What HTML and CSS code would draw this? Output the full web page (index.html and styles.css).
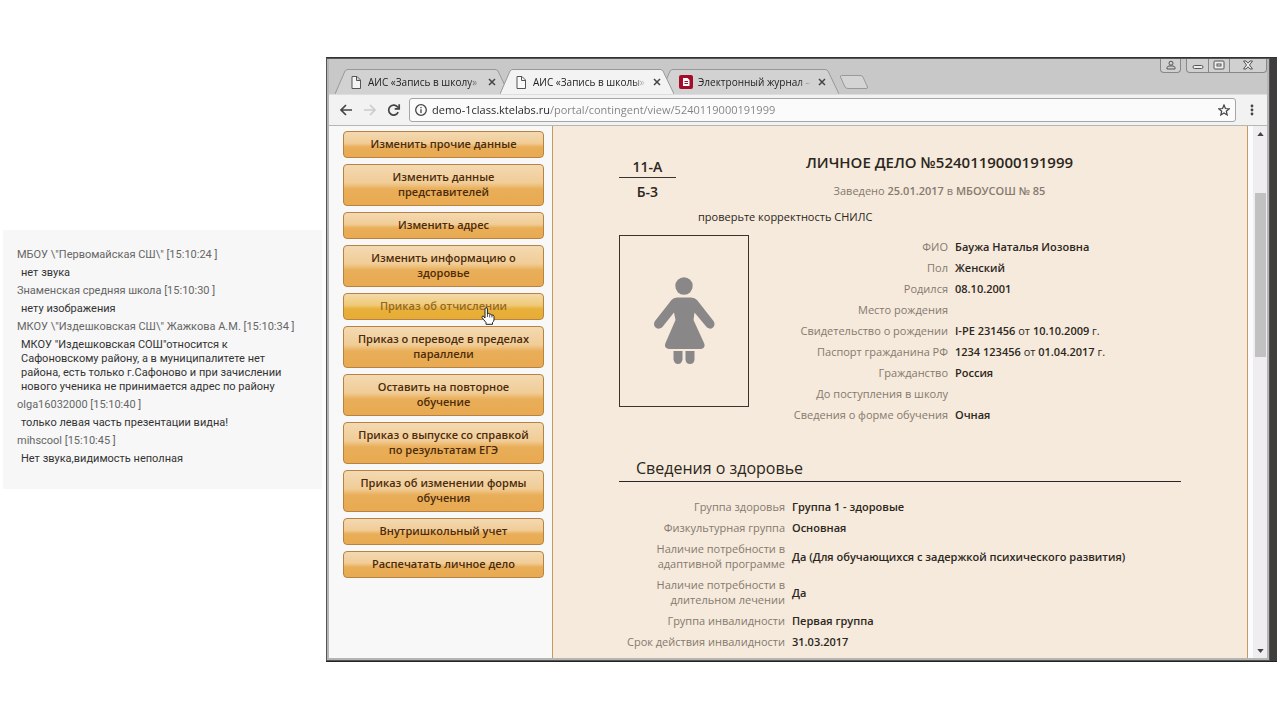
FILE: index.html
```html
<!DOCTYPE html>
<html lang="ru">
<head>
<meta charset="utf-8">
<title>АИС «Запись в школы»</title>
<link rel="stylesheet" href="styles.css">
</head>
<body>
<div class="stage">
  <aside class="chat" aria-label="Чат">
    <p class="chat-name">МБОУ \"Первомайская СШ\" <time>[15:10:24 ]</time></p>
    <p class="chat-text">нет звука</p>
    <p class="chat-name">Знаменская средняя школа <time>[15:10:30 ]</time></p>
    <p class="chat-text">нету изображения</p>
    <p class="chat-name">МКОУ \"Издешковская СШ\" Жажкова А.М. <time>[15:10:34 ]</time></p>
    <p class="chat-text">МКОУ "Издешковская СОШ"относится к<br>Сафоновскому району, а в муниципалитете нет<br>района, есть только г.Сафоново и при зачислении<br>нового ученика не принимается адрес по району</p>
    <p class="chat-name">olga16032000 <time>[15:10:40 ]</time></p>
    <p class="chat-text">только левая часть презентации видна!</p>
    <p class="chat-name">mihscool <time>[15:10:45 ]</time></p>
    <p class="chat-text">Нет звука,видимость неполная</p>
  </aside>

  <div class="desktop">
    <div class="window">
      <header class="titlebar">
        <div class="tabs">
          <div class="tab">
            <svg class="tab-shape" viewBox="0 0 174 25" preserveAspectRatio="none"><path d="M0 25L10 2Q11 .5 13 .5H160Q162 .5 163 2L174 25" fill="#d2d2d2" stroke="#989898"/></svg>
            <svg class="page-icon" viewBox="0 0 10 13"><path d="M1 .5H6L9.500 4V12.500H1ZM5.500 .5V4.500H9.500" fill="#f4f4f4" stroke="#555"/></svg>
            <span class="tab-title">АИС «Запись в школу» -</span>
            <button class="tab-close" aria-label="Закрыть вкладку"><svg viewBox="0 0 8 8"><path d="M1 1L7 7M7 1L1 7"/></svg></button>
          </div>
          <div class="tab tab-active">
            <svg class="tab-shape" viewBox="0 0 174 25" preserveAspectRatio="none"><path d="M0 25L10 2Q11 .5 13 .5H160Q162 .5 163 2L174 25" fill="#f3f3f3" stroke="#989898"/></svg>
            <svg class="page-icon" viewBox="0 0 10 13"><path d="M1 .5H6L9.500 4V12.500H1ZM5.500 .5V4.500H9.500" fill="#fafafa" stroke="#555"/></svg>
            <span class="tab-title">АИС «Запись в школы»</span>
            <button class="tab-close" aria-label="Закрыть вкладку"><svg viewBox="0 0 8 8"><path d="M1 1L7 7M7 1L1 7"/></svg></button>
          </div>
          <div class="tab">
            <svg class="tab-shape" viewBox="0 0 174 25" preserveAspectRatio="none"><path d="M5 25L0 14L5 2Q6 .5 8 .5H160Q162 .5 163 2L174 25" fill="#d2d2d2" stroke="#989898"/></svg>
            <svg class="journal-icon" viewBox="0 0 14 14"><rect width="14" height="14" rx="2" fill="#a30d2a"/><path d="M4 3H8.500L10.500 5V11H4Z" fill="#fff"/><path d="M5.500 6.500H9M5.500 8.500H9" stroke="#a30d2a"/></svg>
            <span class="tab-title">Электронный журнал —</span>
            <button class="tab-close" aria-label="Закрыть вкладку"><svg viewBox="0 0 8 8"><path d="M1 1L7 7M7 1L1 7"/></svg></button>
          </div>
          <button class="new-tab" aria-label="Новая вкладка"><svg viewBox="0 0 30 16"><path d="M2.500 1.500H21Q23 1.500 24 3L28.500 13Q29 14.500 27 14.500H9Q7 14.500 6 13L1.500 3Q1 1.500 2.500 1.500Z" fill="#d4d4d4" stroke="#999"/></svg></button>
        </div>
        <div class="window-controls">
          <button class="control-user" aria-label="Профиль"><svg viewBox="0 0 10 10"><circle cx="5" cy="3.200" r="2"/><path d="M1 9V7.500Q1 6.500 3 6H7Q9 6.500 9 7.500V9Z"/></svg></button>
          <div class="control-group">
            <button class="control" aria-label="Свернуть"><svg viewBox="0 0 12 10"><rect x="1" y="5.500" width="10" height="3" rx="1.500"/></svg></button>
            <button class="control" aria-label="Развернуть"><svg viewBox="0 0 12 10"><rect x="1" y="1" width="10" height="8" rx="1"/><rect x="4" y="4" width="4" height="2"/></svg></button>
            <button class="control control-close" aria-label="Закрыть"><svg viewBox="0 0 12 10"><path d="M1.500 1H4L6 3.200L8 1H10.500L7.500 5L10.500 9H8L6 6.800L4 9H1.500L4.500 5Z"/></svg></button>
          </div>
        </div>
      </header>

      <div class="toolbar">
        <button class="nav" aria-label="Назад"><svg viewBox="0 0 14 12"><path d="M13 6H2M7 1L2 6L7 11"/></svg></button>
        <button class="nav nav-off" aria-label="Вперёд" disabled><svg viewBox="0 0 14 12"><path d="M1 6H12M7 1L12 6L7 11"/></svg></button>
        <button class="nav" aria-label="Обновить"><svg viewBox="0 0 14 12"><path d="M11.200 8.200A5 5 0 1 1 11 3.500M12.200 .3V4.800H7.700"/></svg></button>
        <div class="omnibox">
          <svg class="info" viewBox="0 0 12 12"><circle cx="6" cy="6" r="5.300"/><path d="M6 5.200V9M6 3V4.300"/></svg>
          <input class="url" type="text" aria-label="Адрес" value="demo-1class.ktelabs.ru/portal/contingent/view/5240119000191999">
          <button class="star" aria-label="Добавить в закладки"><svg viewBox="0 0 12 12"><path d="M6 1L7.400 4.500L11.200 4.800L8.300 7.200L9.200 10.900L6 8.900L2.800 10.900L3.700 7.200L.8 4.800L4.600 4.500Z"/></svg></button>
        </div>
        <button class="menu" aria-label="Меню"><svg viewBox="0 0 4 12"><circle cx="2" cy="2" r="1.400"/><circle cx="2" cy="6" r="1.400"/><circle cx="2" cy="10" r="1.400"/></svg></button>
      </div>

      <div class="viewport">
        <nav class="actions">
          <button class="action">Изменить прочие данные</button>
          <button class="action">Изменить данные<br>представителей</button>
          <button class="action">Изменить адрес</button>
          <button class="action">Изменить информацию о<br>здоровье</button>
          <button class="action action-hover">Приказ об отчислении
            <svg class="pointer" viewBox="0 0 14 18"><path d="M4 11V2Q4 .7 5.200 .7T6.400 2V7Q7 6 8.300 6.500L8.700 7.300Q10 6.700 10.800 8Q12.800 7.700 13 9.500V13Q12.500 15 11.500 15.500V17.300H5V15.500Q2.500 12.500 1 10.500Q.8 9 2.200 9Z" fill="#fff" stroke="#222"/><path d="M6.500 7V10M8.700 7.500V10.500M10.900 8V10.500" stroke="#333" stroke-width=".8"/></svg>
          </button>
          <button class="action">Приказ о переводе в пределах<br>параллели</button>
          <button class="action">Оставить на повторное<br>обучение</button>
          <button class="action">Приказ о выпуске со справкой<br>по результатам ЕГЭ</button>
          <button class="action">Приказ об изменении формы<br>обучения</button>
          <button class="action">Внутришкольный учет</button>
          <button class="action">Распечатать личное дело</button>
        </nav>

        <main class="record">
          <div class="record-head">
            <div class="class-mark"><span class="class-top">11-А</span><span>Б-3</span></div>
            <div class="heading">
              <h1>ЛИЧНОЕ ДЕЛО №5240119000191999</h1>
              <p class="opened">Заведено <b>25.01.2017</b> в <b>МБОУСОШ № 85</b></p>
              <p class="notice">проверьте корректность СНИЛС</p>
            </div>
          </div>
          <div class="person">
            <div class="photo"><svg viewBox="0 0 62 88" role="img" aria-label="Женский силуэт"><g fill="#898788"><circle cx="31" cy="9" r="8.700"/><path d="M24 20.500H38Q42 20.500 44 23L60.500 44Q62.500 47 60.500 50Q58 53 54 50.500L41.500 35.500L40.500 43L51 66Q53 71 48 72H16Q10.500 71 12.500 66L22.500 43L21 35.500L9 50.500Q5 53 2 50Q0 47 2 44L18.500 23Q20.500 20.500 24 20.500Z"/><path d="M20.500 74H29.500V82.500Q28.500 87 25 87T20.500 82.500ZM32.500 74H41.500V82.500Q41 87 37 87T32.500 82.500Z"/></g></svg></div>
            <table class="facts facts-person">
              <tr><th scope="row">ФИО</th><td>Баужа Наталья Иозовна</td></tr>
              <tr><th scope="row">Пол</th><td>Женский</td></tr>
              <tr><th scope="row">Родился</th><td>08.10.2001</td></tr>
              <tr><th scope="row">Место рождения</th><td></td></tr>
              <tr><th scope="row">Свидетельство о рождении</th><td>I-РЕ 231456 <span>от</span> 10.10.2009 <span>г.</span></td></tr>
              <tr><th scope="row">Паспорт гражданина РФ</th><td>1234 123456 <span>от</span> 01.04.2017 <span>г.</span></td></tr>
              <tr><th scope="row">Гражданство</th><td>Россия</td></tr>
              <tr><th scope="row">До поступления в школу</th><td></td></tr>
              <tr><th scope="row">Сведения о форме обучения</th><td>Очная</td></tr>
            </table>
          </div>
          <h2>Сведения о здоровье</h2>
          <table class="facts facts-health">
            <tr><th scope="row">Группа здоровья</th><td>Группа 1 - здоровые</td></tr>
            <tr><th scope="row">Физкультурная группа</th><td>Основная</td></tr>
            <tr><th scope="row">Наличие потребности в<br>адаптивной программе</th><td>Да (Для обучающихся с задержкой психического развития)</td></tr>
            <tr><th scope="row">Наличие потребности в<br>длительном лечении</th><td>Да</td></tr>
            <tr><th scope="row">Группа инвалидности</th><td>Первая группа</td></tr>
            <tr><th scope="row">Срок действия инвалидности</th><td>31.03.2017</td></tr>
          </table>
        </main>

        <div class="scrollbar">
          <svg class="arrow" viewBox="0 0 8 5"><path d="M0 5L4 0L8 5Z"/></svg>
          <div class="thumb"></div>
          <svg class="arrow" viewBox="0 0 8 5"><path d="M0 0L4 5L8 0Z"/></svg>
        </div>
      </div>
    </div>
  </div>
</div>
</body>
</html>
```
FILE: styles.css
```css
* { box-sizing: border-box; }
body { margin: 0; background: #fff; font-family: "Open Sans", "Noto Sans", sans-serif; }
p, h1, h2 { margin: 0; }
button { margin: 0; padding: 0; border: 0; background: none; font: inherit; color: inherit; }
svg { display: block; fill: none; }

.stage { display: flex; align-items: flex-start; padding: 57px 3px; }

.chat {
  flex: 0 0 319px;
  display: flex;
  flex-direction: column;
  gap: 4px;
  margin: 173px 4px 0 0;
  padding: 18px 14px 23px;
  background: #f7f7f7;
  font-family: Roboto, "Open Sans", sans-serif;
  font-size: 11px;
  line-height: 14px;
  white-space: nowrap;
}
.chat-name { color: #666; }
.chat-text { padding-left: 4px; color: #333; }

.desktop {
  flex: 1;
  min-width: 0;
  padding-right: 7px;
  border-top: 1px solid #333;
  border-bottom: 1px solid #222;
  background: #3f3e3c;
}
.window {
  border: solid #b5b5b5;
  border-width: 0 3px 3px;
  outline: 1px solid #555;
  outline-offset: -1px;
  background: #c8c8c8;
}

.titlebar { display: flex; justify-content: space-between; align-items: flex-start; height: 36px; }
.tabs { display: flex; align-items: flex-end; height: 36px; padding-left: 6px; }
.tab {
  position: relative;
  isolation: isolate;
  display: flex;
  align-items: center;
  width: 174px;
  height: 25px;
  margin-right: -9px;
  padding: 1px 13px 0 16px;
  font-size: 10px;
  line-height: 14px;
  color: #222;
}
.tab-active { z-index: 1; }
.tab-shape { position: absolute; inset: 0; width: 100%; height: 100%; z-index: -1; }
.page-icon { flex: none; width: 10px; height: 13px; margin-right: 7px; }
.journal-icon { flex: none; width: 14px; height: 14px; margin: 0 5px 0 -2px; }
.tab-title {
  flex: 1;
  min-width: 0;
  white-space: nowrap;
  -webkit-mask-image: linear-gradient(to left, transparent, #000 12px);
  mask-image: linear-gradient(to left, transparent, #000 12px);
}
.tab-close { flex: none; width: 8px; height: 8px; margin-left: 7px; }
.tab-close svg { stroke: #444; stroke-width: 1.5; }
.new-tab { width: 30px; height: 16px; margin: 0 0 4px 9px; }

.window-controls { display: flex; gap: 5px; }
.control-user, .control-group { height: 15px; border: 1px solid #888; border-top: 0; border-radius: 0 0 4px 4px; background: #d0d0d0; }
.control-user { display: flex; align-items: center; justify-content: center; width: 21px; }
.control-user svg { width: 10px; height: 10px; stroke: #555; }
.control-group { display: flex; }
.control { display: flex; align-items: center; justify-content: center; width: 21px; }
.control + .control { border-left: 1px solid #888; }
.control-close { width: 37px; }
.control svg { width: 12px; height: 10px; fill: #eee; stroke: #555; }

.toolbar { display: flex; align-items: center; height: 32px; padding: 0 8px 1px 10px; background: #f2f2f2; border-top: 1px solid #ddd; border-bottom: 1px solid #b6b6b6; }
.nav { width: 14px; height: 12px; margin-right: 10px; }
.nav:nth-child(3) { margin-right: 8px; }
.nav svg { stroke: #444; stroke-width: 1.7; }
.nav-off svg { stroke: #ccc; }
.omnibox { flex: 1; display: flex; align-items: center; height: 24px; padding: 0 5px; border: 1px solid #a5a5a5; border-radius: 3px; background: #fbfbfb; }
.info { width: 12px; height: 12px; stroke: #444; stroke-width: 1.3; }
.url {
  flex: 1;
  min-width: 0;
  height: 20px;
  padding: 0 5px;
  border: 0;
  outline: 0;
  background: linear-gradient(to right, #222 123px, #808080 123px);
  -webkit-background-clip: text;
  background-clip: text;
  color: transparent;
  font-family: "Open Sans", "Noto Sans", sans-serif;
  font-size: 11px;
}
.star { width: 12px; height: 12px; }
.star svg { stroke: #444; stroke-width: 1.2; }
.menu { width: 4px; height: 12px; margin: 0 5px 0 14px; }
.menu svg { fill: #444; }

.viewport { display: flex; background: #f8f8f8; }
.actions { flex: 0 0 223px; display: flex; flex-direction: column; gap: 6px; padding: 5px 8px 64px 14px; }
.action {
  position: relative;
  padding: 4px 4px 6px;
  border: 1px solid #b98240;
  border-radius: 4px;
  background: linear-gradient(#f3d9b2, #f1cc96 45%, #e9ae59 60%, #e8aa52);
  font-size: 11px;
  font-weight: 600;
  line-height: 15px;
  color: #4b2a0a;
  white-space: nowrap;
}
.action-hover { background: linear-gradient(#f3dba8, #efc977 45%, #e8b03a 60%, #e7ad35); color: #94691f; }
.pointer { position: absolute; left: 137px; top: 13px; width: 14px; height: 18px; z-index: 2; }

.record { flex: 1; min-width: 0; padding: 26px 66px 6px; border: solid #c79a5c; border-width: 0 1px; background: #f5eadc; color: #2c2620; }
.record-head { display: flex; gap: 22px; }
.class-mark { flex: 0 0 57px; display: flex; flex-direction: column; align-self: flex-start; padding-top: 5px; font-size: 14px; font-weight: 600; line-height: 20px; text-align: center; }
.class-top { margin-bottom: 4px; border-bottom: 1px solid #3c332c; }
.heading { flex: 1; min-width: 0; text-align: center; }
h1 { font-size: 15px; font-weight: 600; line-height: 20px; }
.opened { margin-top: 11px; font-size: 11px; line-height: 15px; color: #86796e; }
.opened b { font-weight: 600; }
.notice { margin-top: 11px; font-size: 11px; line-height: 15px; text-align: left; }
.person { display: flex; align-items: flex-start; margin-top: 11px; }
.photo { flex: none; display: flex; align-items: center; justify-content: center; width: 130px; height: 172px; border: 1px solid #3c332c; }
.photo svg { width: 62px; height: 88px; }
.facts { border-collapse: collapse; font-size: 11px; line-height: 15px; }
.facts th, .facts td { padding: 3px 0; }
.facts th { font-weight: 400; text-align: right; color: #86796e; white-space: nowrap; }
.facts td { height: 21px; padding-left: 7px; font-weight: 600; }
.facts td span { font-weight: 400; }
.facts-person { margin-top: 1px; }
.facts-person th { width: 199px; }
.facts-health th { width: 166px; }
h2 { margin: 33px 0 14px; padding: 0 17px 3px; border-bottom: 1px solid #2c2620; font-size: 16px; font-weight: 400; line-height: 20px; }

.scrollbar { flex: 0 0 19px; display: flex; flex-direction: column; align-items: center; padding: 6px 0 5px 5px; background: linear-gradient(to right, #fbfafc 5px, #efedf0 5px); }
.arrow { width: 7px; height: 4px; fill: #444; }
.thumb { width: 11px; height: 164px; margin: 57px 0 auto; background: #c1c1c1; }
```
